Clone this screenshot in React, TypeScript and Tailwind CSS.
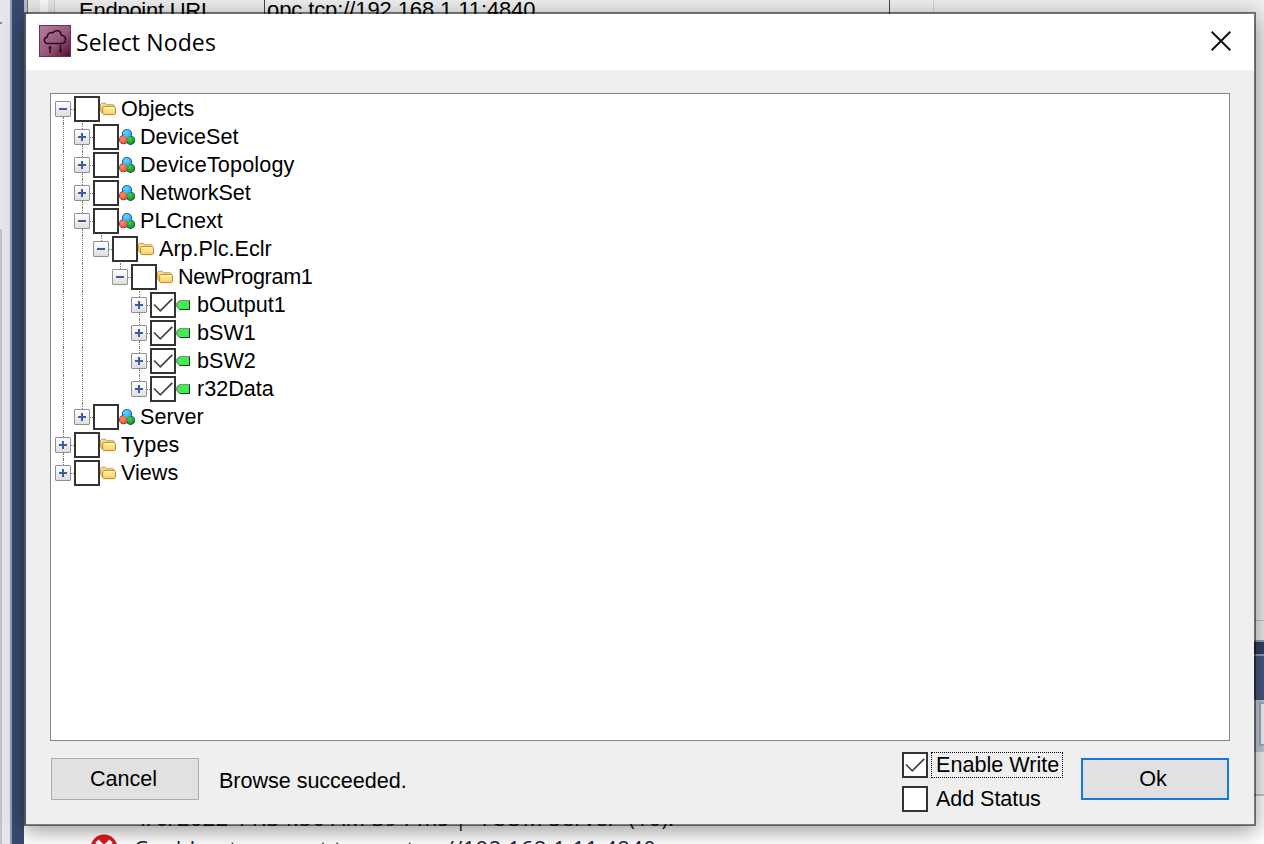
import React from 'react';
import clsx from 'clsx';

type NodeKind = 'folder' | 'object' | 'variable';

interface TreeNode {
  name: string;
  kind: NodeKind;
  expanded?: boolean;
  checked?: boolean;
  labelClass?: string;
  children?: TreeNode[];
}

const NODES: TreeNode[] = [
  {
    name: 'Objects',
    kind: 'folder',
    expanded: true,
    children: [
      { name: 'DeviceSet', kind: 'object' },
      { name: 'DeviceTopology', kind: 'object', labelClass: 'tracking-[0.15px]' },
      { name: 'NetworkSet', kind: 'object', labelClass: 'tracking-[-0.1px]' },
      {
        name: 'PLCnext',
        kind: 'object',
        expanded: true,
        children: [
          {
            name: 'Arp.Plc.Eclr',
            kind: 'folder',
            expanded: true,
            children: [
              {
                name: 'NewProgram1',
                kind: 'folder',
                labelClass: 'tracking-[-0.32px]',
                expanded: true,
                children: [
                  { name: 'bOutput1', kind: 'variable', checked: true },
                  { name: 'bSW1', kind: 'variable', checked: true },
                  { name: 'bSW2', kind: 'variable', checked: true },
                  { name: 'r32Data', kind: 'variable', checked: true },
                ],
              },
            ],
          },
        ],
      },
      { name: 'Server', kind: 'object' },
    ],
  },
  { name: 'Types', kind: 'folder', labelClass: 'tracking-[0.2px]' },
  { name: 'Views', kind: 'folder' },
];

const FolderIcon = () => (
  <svg width="16" height="16" viewBox="0 0 16 16">
    <defs>
      <linearGradient id="folder" x1="0" y1="0" x2="0" y2="1">
        <stop offset="0" stopColor="#fff6a8" />
        <stop offset="1" stopColor="#f8cf58" />
      </linearGradient>
    </defs>
    <path d="M.6 3.600 1.700 2.200h3.600l1.400 1.500h6.600l1 1v7.600H2.600L.6 9.800z" fill="#f7dc86" stroke="#c8923a" strokeWidth=".9" />
    <path d="M2.600 6.800 3.600 5.600h11l.9.9v5.800l-1 1.300H3.600l-1-1z" fill="url(#folder)" stroke="#b97a20" strokeWidth=".9" />
    <path d="M4 6.600h10" stroke="#fffbe0" strokeWidth=".8" />
  </svg>
);

const ObjectIcon = () => (
  <svg width="16" height="16" viewBox="0 0 16 16">
    <defs>
      <radialGradient id="ballBlue" cx=".4" cy=".35" r=".7">
        <stop offset="0" stopColor="#62dcff" />
        <stop offset="1" stopColor="#1fa2f2" />
      </radialGradient>
      <radialGradient id="ballRed" cx=".4" cy=".35" r=".7">
        <stop offset="0" stopColor="#ff9468" />
        <stop offset="1" stopColor="#ee4c22" />
      </radialGradient>
      <radialGradient id="ballGreen" cx=".4" cy=".35" r=".7">
        <stop offset="0" stopColor="#3fcf46" />
        <stop offset="1" stopColor="#0c8f20" />
      </radialGradient>
    </defs>
    <g fill="#1c2f96">
      <circle cx="8" cy="5" r="5" />
      <circle cx="4.500" cy="10.800" r="4.500" />
      <circle cx="11.500" cy="11.300" r="4.600" />
    </g>
    <circle cx="8" cy="4.900" r="4.300" fill="url(#ballBlue)" />
    <circle cx="4.300" cy="10.800" r="3.900" fill="url(#ballRed)" />
    <circle cx="11.700" cy="11.200" r="3.900" fill="url(#ballGreen)" />
  </svg>
);

const VariableIcon = () => (
  <svg width="16" height="16" viewBox="0 0 16 16">
    <path d="M3.500 3.500h10v9h-10L.8 10V6z" fill="#3df04f" stroke="#5f7d66" />
    <path d="M3.500 3.500h10" stroke="#7d9481" />
    <path d="M13.500 3.500v9h-10" fill="none" stroke="#1c3b22" />
    <circle cx="3.200" cy="7" r="1.100" fill="#d8f5da" stroke="#648a68" strokeWidth=".6" />
  </svg>
);

const ICONS: Record<NodeKind, React.FC> = {
  folder: FolderIcon,
  object: ObjectIcon,
  variable: VariableIcon,
};

const CheckBox: React.FC<{ checked?: boolean }> = ({ checked }) => (
  <span className="w-[26px] h-[26px] border-2 border-[#333] bg-white flex-shrink-0">
    {checked && (
      <svg width="22" height="22" viewBox="0 0 22 22" fill="none" stroke="#444" strokeWidth="1.7">
        <path d="M2 10.500 8.300 16.800 20.300 4.800" />
      </svg>
    )}
  </span>
);

const Expander: React.FC<{ expanded?: boolean }> = ({ expanded }) => (
  <span className="w-4 h-4 flex-shrink-0 border border-[#919191] rounded-[1px] bg-linear-to-b from-white to-[#dedede]">
    <svg width="14" height="14" viewBox="0 0 14 14" stroke="#3f5ba5" strokeWidth="2">
      <path d={expanded ? 'M3 7h8' : 'M3 7h8M7 3v8'} />
    </svg>
  </span>
);

// Vertical piece of a connector line
const Guide: React.FC<{ visible: boolean; className: string }> = ({ visible, className }) => (
  <span className={clsx('block ml-2 w-0', visible && 'border-l border-dotted border-[#777]', className)} />
);

interface TreeRowsProps {
  nodes: TreeNode[];
  guides?: boolean[];
}

const TreeRows: React.FC<TreeRowsProps> = ({ nodes, guides = [] }) => (
  <>
    {nodes.map((node, i) => {
      const isRoot = guides.length === 0;
      const hasNext = i < nodes.length - 1;
      const Icon = ICONS[node.kind];

      return (
        <React.Fragment key={node.name}>
          <div className="h-7 flex items-center pl-1">
            {guides.map((visible, level) => (
              <span key={level} className="w-[19px] flex-shrink-0">
                <Guide visible={visible} className="h-7" />
              </span>
            ))}
            <span className="w-[19px] flex-shrink-0">
              <Guide visible={!isRoot || i > 0} className="h-1.5" />
              <span className="flex items-center">
                <Expander expanded={node.expanded} />
                <span className="w-[3px] border-t border-dotted border-[#777]" />
              </span>
              <Guide visible={hasNext} className="h-1.5" />
            </span>
            <CheckBox checked={node.checked} />
            <Icon />
            <span className={clsx('pl-[5px] leading-7 whitespace-nowrap', node.labelClass)}>{node.name}</span>
          </div>
          {node.expanded && node.children && (
            <TreeRows nodes={node.children} guides={[...guides, hasNext]} />
          )}
        </React.Fragment>
      );
    })}
  </>
);

const AppIcon = () => (
  <svg width="32" height="32" viewBox="0 0 32 32">
    <defs>
      <linearGradient id="appIcon" x1="0" y1="0" x2="1" y2="1">
        <stop offset="0" stopColor="#b77d9f" />
        <stop offset=".55" stopColor="#95577a" />
        <stop offset="1" stopColor="#4d0d2b" />
      </linearGradient>
    </defs>
    <rect x=".5" y=".5" width="31" height="31" fill="url(#appIcon)" stroke="#6a3350" />
    <path
      d="M9.500 18.500C4.300 18.500 4.200 12.800 8.300 12 8 8.200 11.800 6.800 13.600 8 16 4.300 21.800 5.200 22.300 10.200c5.700.3 5.500 8.300 0 8.300z"
      fill="none"
      stroke="#2b0c20"
      strokeWidth="1.5"
    />
    <path d="M11 28v-6M21.500 20v6" stroke="#2b0c20" strokeWidth="1.500" />
    <path d="M9 23.500 11 20.300l2 3.200zM19.500 24.800l2 3.200 2-3.200z" fill="#2b0c20" />
  </svg>
);

const Workspace = () => (
  <div className="flex h-full text-[22px] leading-7">
    <div className="w-2.5 bg-[#e6e6ec]">
      <div className="h-[229px] pt-[22px]">
        <div className="w-0.5 h-0.5 bg-[#8a8a90]" />
      </div>
      <div className="w-0.5 h-[615px] bg-[#c2c2c8]" />
    </div>
    <div className="w-0.5 bg-[#8e9cbc]" />
    <div className="w-3 bg-[#364b6e]" />
    <div className="flex-1 flex flex-col min-w-0">
      {/* Property grid */}
      <div className="h-[620px] flex flex-shrink-0 bg-[#ededed] overflow-hidden">
        <div className="w-1 bg-[#b4bccd] border-r border-[#777]" />
        <div className="w-3 bg-[#e6e6e6]" />
        <div className="w-2 bg-[#f8f8f8]" />
        <div className="w-[7px] bg-[#e6e6e6] border-r border-[#cfcfcf]" />
        <div className="w-[209px] pl-6 h-7 -mt-[3px] whitespace-nowrap tracking-[-0.25px]">Endpoint URL</div>
        <div className="w-[626px] h-7 -mt-1 pl-0.5 border-x border-[#444] whitespace-nowrap tracking-[-0.1px]">
          opc.tcp://192.168.1.11:4840
        </div>
        <div className="w-11 border-r border-[#d0d0d0]" />
      </div>
      <div className="h-5 flex-shrink-0 bg-[#ededed] border-t border-[#c4c4c4]" />
      <div className="h-4 flex-shrink-0 bg-[#32445f] border-y-2 border-[#8e9cbc]" />
      <div className="h-11 flex-shrink-0 bg-[#475a7f]" />
      <div className="h-[52px] flex-shrink-0 bg-[#c3cada] flex justify-end pt-0.5">
        <div className="w-[5px] h-11 border-2 border-r-0 border-[#a4adc0] bg-[#f5f5f5]" />
      </div>
      <div className="h-11 flex-shrink-0 bg-[#f3f3f5] border-b-2 border-[#bfc4d8]" />
      {/* Error list */}
      <div className="flex-1 bg-white pl-[110px] pt-[7px] text-[#1b2238] whitespace-nowrap font-['Open_Sans','Noto_Sans',sans-serif] text-[22px] tracking-[0.4px]">
        <div className="h-[31px]">4/6/2022 11:34:56 AM 394 ms | 'TCOM Server' (10):</div>
        <div className="h-7 flex items-start">
          <svg className="-ml-[44px] mr-4 flex-shrink-0" width="28" height="28" viewBox="0 0 28 28">
            <circle cx="14" cy="14" r="13.500" fill="#d91c1c" />
            <path d="m7 7 14 14M21 7 7 21" stroke="#fff" strokeWidth="4.500" />
          </svg>
          <span>Could not connect to opc.tcp://192.168.1.11:4840</span>
        </div>
      </div>
    </div>
  </div>
);

const SelectNodesDialog = () => (
  <div className="absolute left-6 top-3 w-[1232px] h-[814px] flex flex-col border-2 border-black/50 border-l-[#50545e] bg-[#efefef] bg-clip-padding shadow-[0_5px_20px_rgba(0,0,0,0.4)]">
    <div className="h-14 bg-white flex items-center flex-shrink-0 pl-[13px] pr-[23px] pb-0.5">
      <AppIcon />
      <h1 className="flex-1 pl-[5px] pt-0.5 font-['Open_Sans','Noto_Sans',sans-serif] text-[23px] tracking-[0.12px]">
        Select Nodes
      </h1>
      <svg width="20" height="20" viewBox="0 0 20 20" stroke="#111" strokeWidth="2">
        <path d="m.7.7 18.600 18.600M19.300.7.7 19.300" />
      </svg>
    </div>

    <div className="mt-[23px] mx-6 h-[648px] flex-shrink-0 border border-[#828790] bg-white pt-px">
      <TreeRows nodes={NODES} />
    </div>

    <div className="flex px-[25px] pt-[11px]">
      <button className="mt-1.5 w-[148px] h-[42px] pr-[3px] border border-[#adadad] bg-[#e1e1e1]">Cancel</button>
      <span className="flex-1 pl-5 pt-[13px] tracking-[-0.05px]">Browse succeeded.</span>
      <div className="w-[179px] flex flex-col gap-2">
        <label className="flex h-[26px]">
          <CheckBox checked />
          <span className="ml-[3px] w-[132px] h-[26px] pl-1 border border-dotted border-black leading-[24px] whitespace-nowrap">
            Enable Write
          </span>
        </label>
        <label className="flex h-[26px]">
          <CheckBox />
          <span className="pl-2 leading-[26px] tracking-[-0.08px]">Add Status</span>
        </label>
      </div>
      <button className="mt-1.5 w-[148px] h-[42px] pr-1 border-2 border-[#1179d6] bg-[#e1e1e1]">Ok</button>
    </div>
  </div>
);

const App: React.FC = () => (
  <div className="relative w-[1264px] h-[844px] overflow-hidden bg-white text-black font-['Liberation_Sans',Arial,sans-serif] text-[21.6px]">
    <Workspace />
    <SelectNodesDialog />
  </div>
);

export default App;
